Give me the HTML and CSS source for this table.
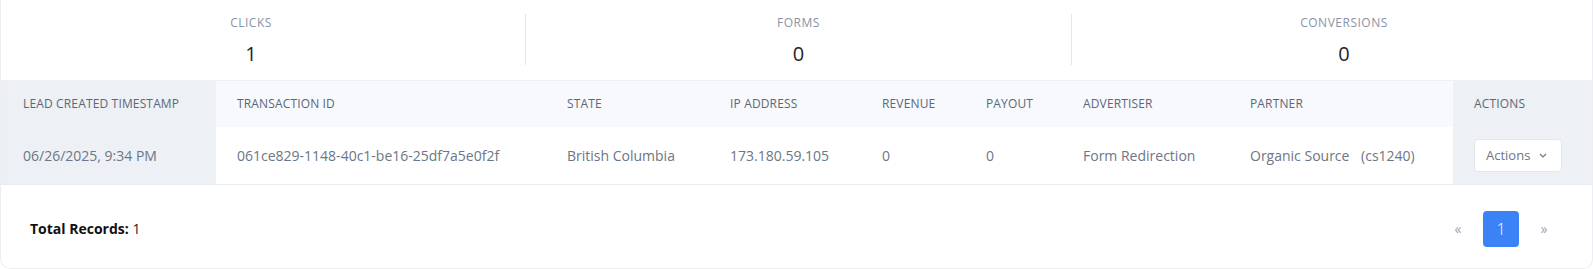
FILE: index.html
```html
<!DOCTYPE html>
<html lang="en">
<head>
<meta charset="utf-8">
<title>Leads</title>
<link rel="stylesheet" href="styles.css">
</head>
<body>
<div class="card">
  <div class="stats">
    <div class="stat stat-first">
      <div class="stat-label">Clicks</div>
      <div class="stat-value">1</div>
    </div>
    <div class="stat">
      <div class="stat-label">Forms</div>
      <div class="stat-value">0</div>
    </div>
    <div class="stat stat-last">
      <div class="stat-label">Conversions</div>
      <div class="stat-value">0</div>
    </div>
  </div>
  <table class="grid">
    <colgroup>
      <col class="w-ts"><col class="w-tx"><col class="w-state"><col class="w-ip"><col class="w-rev"><col class="w-pay"><col class="w-adv"><col class="w-part"><col class="w-act">
    </colgroup>
    <thead>
      <tr>
        <th class="sticky">Lead Created Timestamp</th>
        <th>Transaction ID</th>
        <th>State</th>
        <th>IP Address</th>
        <th>Revenue</th>
        <th>Payout</th>
        <th>Advertiser</th>
        <th>Partner</th>
        <th class="sticky">Actions</th>
      </tr>
    </thead>
    <tbody>
      <tr>
        <td class="sticky">06/26/2025, 9:34 PM</td>
        <td>061ce829-1148-40c1-be16-25df7a5e0f2f</td>
        <td>British Columbia</td>
        <td>173.180.59.105</td>
        <td>0</td>
        <td>0</td>
        <td>Form Redirection</td>
        <td>Organic Source <span class="code">(cs1240)</span></td>
        <td class="sticky">
          <button class="act-btn" type="button">Actions
            <svg class="chev" width="8" height="5" viewBox="0 0 8 5"><polyline points="1,1 4,4 7,1" fill="none" stroke="#6b7686" stroke-width="1.2"/></svg>
          </button>
        </td>
      </tr>
    </tbody>
  </table>
  <div class="footer">
    <div class="total"><b>Total Records:</b> 1</div>
    <nav class="pager">
      <span class="pg pg-nav">&laquo;</span>
      <span class="pg pg-active">1</span>
      <span class="pg pg-nav">&raquo;</span>
    </nav>
  </div>
</div>
</body>
</html>
```

FILE: styles.css
```css
* { box-sizing: border-box; }
html, body { margin: 0; padding: 0; background: #ffffff; }
body {
  font-family: "Open Sans", "Liberation Sans", sans-serif;
  width: 1593px;
  height: 269px;
  overflow: hidden;
}
.card {
  width: 1593px;
  height: 269px;
  border: 1px solid #eceef2;
  border-top: none;
  border-radius: 0 0 10px 10px;
  background: #fff;
  overflow: hidden;
}
.stats {
  display: grid;
  grid-template-columns: 524px 546px 1fr;
  padding: 14px 0 15px;
  height: 80px;
}
.stat {
  height: 51px;
  display: flex;
  flex-direction: column;
  align-items: center;
  border-left: 1px solid #e3e6ed;
}
.stat-first { border-left: none; padding-right: 24px; }
.stat-last { padding-left: 24px; }
.stat-label {
  margin-top: 1px;
  font-size: 12px;
  line-height: 16px;
  letter-spacing: 0.5px;
  text-transform: uppercase;
  color: #8894a6;
}
.stat-value {
  margin-top: 9px;
  font-size: 20px;
  line-height: 28px;
  color: #1f2329;
}
.grid {
  width: 1591px;
  border-collapse: collapse;
  table-layout: fixed;
}
.w-ts { width: 215px; }
.w-tx { width: 330px; }
.w-state { width: 163px; }
.w-ip { width: 152px; }
.w-rev { width: 104px; }
.w-pay { width: 97px; }
.w-adv { width: 167px; }
.w-part { width: 224px; }
.w-act { width: 139px; }
.grid th {
  height: 46px;
  padding: 0 0 0 21px;
  background: #f7f9fc;
  border-top: 1px solid #eef0f4;
  text-align: left;
  font-size: 12px;
  font-weight: 500;
  letter-spacing: 0.15px;
  text-transform: uppercase;
  color: #5c6778;
  white-space: nowrap;
}
.grid td {
  height: 58px;
  padding: 0 0 0 21px;
  font-size: 14px;
  color: #6b7686;
  border-bottom: 1px solid #e8ebf0;
  white-space: nowrap;
}
.grid th:first-child, .grid td:first-child { padding-left: 22px; }
.grid .sticky { background: #edf0f5; }
.code { margin-left: 8px; }
.act-btn {
  width: 88px;
  height: 33px;
  display: inline-flex;
  align-items: center;
  padding: 0 0 0 11px;
  gap: 9px;
  background: #fff;
  border: 1px solid #e3e7ee;
  border-radius: 4px;
  font-family: inherit;
  font-size: 13px;
  color: #6b7686;
}
.footer {
  height: 83px;
  display: flex;
  align-items: center;
  justify-content: space-between;
  padding: 4px 30px 0 29px;
}
.total {
  font-size: 14px;
  color: #1f2329;
}
.total b { font-weight: 700; color: #111; }
.pager {
  display: flex;
  gap: 7px;
}
.pg {
  width: 36px;
  height: 36px;
  display: flex;
  align-items: center;
  justify-content: center;
  border-radius: 4px;
  font-size: 15px;
}
.pg-nav { color: #9aa4b2; font-size: 14px; }
.pg-active { background: #3b82f6; color: #fff; font-weight: 300; font-size: 16px; }
```
